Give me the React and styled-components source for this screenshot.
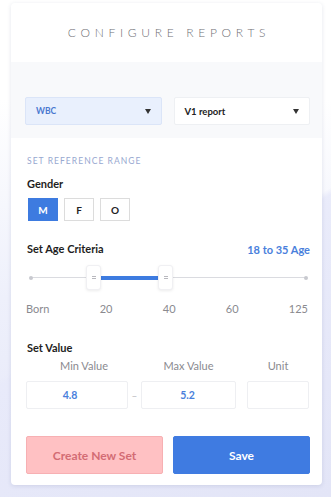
import styled, { createGlobalStyle } from 'styled-components'

const GlobalStyle = createGlobalStyle`
  html, body {
    margin: 0;
    padding: 0;
  }
  body {
    font-family: Lato, 'Open Sans', sans-serif;
    width: 331px;
    height: 497px;
    overflow: hidden;
    background:
      linear-gradient(150deg, rgba(255,255,255,0) 55%, rgba(232,234,250,0.9) 56%, #e3e5f7 100%),
      linear-gradient(180deg, #ffffff 0%, #ffffff 20%, #eef0fb 60%, #e4e6f8 100%);
  }
`

const Page = styled.div`
  padding: 3px 9px 0 11px;
`

const Card = styled.div`
  background: #fff;
  border-radius: 4px;
  box-shadow: 0 1px 4px rgba(60, 70, 120, 0.14);
  overflow: hidden;
`

const Header = styled.div`
  height: 59px;
  display: flex;
  align-items: center;
  justify-content: center;
  font-size: 12px;
  font-weight: 300;
  letter-spacing: 4.7px;
  color: #6f6f75;
  padding-left: 5px;
`

const SelectBar = styled.div`
  background: #f8f9fb;
  padding: 35px 12px 13px 14px;
  display: grid;
  grid-template-columns: 1fr 1fr;
  gap: 12px;
`

const Select = styled.div`
  height: 28px;
  box-sizing: border-box;
  display: flex;
  align-items: center;
  justify-content: space-between;
  padding: 0 10px 0 10px;
  border-radius: 2px;
  background: ${p => (p.$active ? '#e9f0fd' : '#fff')};
  border: 1px solid ${p => (p.$active ? '#dbe5f8' : '#eef0f3')};
  color: ${p => (p.$active ? '#4a78d0' : '#222')};
  font-size: ${p => (p.$active ? '8.5px' : '9.5px')};
  font-weight: 700;
`

const Caret = styled.span`
  width: 0;
  height: 0;
  border-left: 3.5px solid transparent;
  border-right: 3.5px solid transparent;
  border-top: 5px solid #333;
`

const Body = styled.div`
  padding: 18px 12px 11px 14px;
  display: flex;
  flex-direction: column;
`

const Overline = styled.div`
  font-size: 8.5px;
  line-height: 10px;
  letter-spacing: 1.05px;
  color: #97a8d0;
  margin-left: 2px;
`

const Label = styled.div`
  font-size: 11px;
  line-height: 14px;
  font-weight: 700;
  color: #1e1e22;
  margin-top: ${p => p.$top || 0}px;
  margin-left: 2px;
`

const Row = styled.div`
  display: flex;
  justify-content: space-between;
  align-items: center;
  margin-top: ${p => p.$top || 0}px;
`

const RangeText = styled.span`
  font-size: 11px;
  font-weight: 700;
  color: #4a7fdc;
`

const GenderGroup = styled.div`
  display: flex;
  gap: 6px;
  margin: 7px 0 0 3px;
`

const GenderBtn = styled.div`
  width: 30px;
  height: 23px;
  box-sizing: border-box;
  display: flex;
  align-items: center;
  justify-content: center;
  font-size: 10px;
  font-weight: 700;
  background: ${p => (p.$on ? '#3d7be0' : '#fff')};
  color: ${p => (p.$on ? '#fff' : '#222')};
  border: 1px solid ${p => (p.$on ? '#3d7be0' : '#dcdcdc')};
`

const Slider = styled.div`
  position: relative;
  height: 25px;
  margin: 9px 0 0 0;
`

const Track = styled.div`
  position: absolute;
  left: 5px;
  right: 3px;
  top: 12px;
  height: 1px;
  background: #dadbe0;

  &::before,
  &::after {
    content: '';
    position: absolute;
    top: -1.5px;
    width: 4px;
    height: 4px;
    border-radius: 50%;
    background: #c8c9cf;
  }
  &::before { left: -1px; }
  &::after { right: -1px; }
`

const Fill = styled.div`
  position: absolute;
  top: 10.5px;
  height: 4px;
  background: #3d7be0;
`

const Handle = styled.div`
  position: absolute;
  top: 0;
  width: 15px;
  height: 25px;
  box-sizing: border-box;
  border-radius: 3px;
  background: #fff;
  border: 1px solid #f0f0f3;
  box-shadow: 0 1px 3px rgba(0, 0, 0, 0.08);

  &::before {
    content: '';
    position: absolute;
    left: 5px;
    top: 10px;
    width: 4px;
    height: 1px;
    border-top: 1px solid #b8b8be;
    border-bottom: 1px solid #b8b8be;
  }
`

const Ticks = styled.div`
  display: flex;
  justify-content: space-between;
  margin: 12px 2px 0 1px;
  font-size: 11px;
  line-height: 14px;
  color: #8a8a8f;
`

const Cols = styled.div`
  display: grid;
  grid-template-columns: 102px 13px 95px 73px;
  margin-top: ${p => p.$top || 0}px;
  margin-left: 1px;
  align-items: center;

  & > :nth-child(4) { margin-left: 11px; }
`

const ColHead = styled.div`
  font-size: 11px;
  line-height: 13px;
  color: #8a8a8f;
  text-align: center;
  padding-left: ${p => p.$shift || 0}px;
`

const ValueBox = styled.div`
  height: 28px;
  box-sizing: border-box;
  border: 1px solid #eeeff2;
  border-radius: 2px;
  background: #fff;
  display: flex;
  align-items: center;
  justify-content: center;
  font-size: 10.5px;
  font-weight: 700;
  color: #4a7fdc;
  padding-right: ${p => p.$shift || 0}px;
`

const Dash = styled.div`
  text-align: center;
  color: #b8b8bd;
  font-size: 10px;
`

const Actions = styled.div`
  display: grid;
  grid-template-columns: 137px 137px;
  justify-content: space-between;
  margin: 27px 0 0 1px;
`

const ActionBtn = styled.div`
  height: 38px;
  box-sizing: border-box;
  border-radius: 2px;
  display: flex;
  align-items: center;
  justify-content: center;
  font-size: 12px;
  font-weight: 700;
  background: ${p => (p.$primary ? '#3f7be1' : '#ffc1c3')};
  color: ${p => (p.$primary ? '#fff' : '#d36c74')};
  border: 1px solid ${p => (p.$primary ? '#3f7be1' : '#f7b0b3')};
`

export default function App() {
  // handles sit at 18 and 35 on the scale
  const low = 61
  const high = 133
  return (
    <>
      <GlobalStyle />
      <Page>
        <Card>
          <Header>CONFIGURE REPORTS</Header>
          <SelectBar>
            <Select $active>
              WBC <Caret />
            </Select>
            <Select>
              V1 report <Caret />
            </Select>
          </SelectBar>
          <Body>
            <Overline>SET REFERENCE RANGE</Overline>
            <Label $top={11}>Gender</Label>
            <GenderGroup>
              <GenderBtn $on>M</GenderBtn>
              <GenderBtn>F</GenderBtn>
              <GenderBtn>O</GenderBtn>
            </GenderGroup>
            <Row $top={21}>
              <Label>Set Age Criteria</Label>
              <RangeText>18 to 35 Age</RangeText>
            </Row>
            <Slider>
              <Track />
              <Fill style={{ left: low + 15, width: high - low - 15 }} />
              <Handle style={{ left: low }} />
              <Handle style={{ left: high }} />
            </Slider>
            <Ticks>
              <span>Born</span>
              <span>20</span>
              <span>40</span>
              <span>60</span>
              <span>125</span>
            </Ticks>
            <Label $top={25}>Set Value</Label>
            <Cols $top={4}>
              <ColHead $shift={14}>Min Value</ColHead>
              <span />
              <ColHead>Max Value</ColHead>
              <ColHead>Unit</ColHead>
            </Cols>
            <Cols $top={9}>
              <ValueBox $shift={14}>4.8</ValueBox>
              <Dash>–</Dash>
              <ValueBox $shift={2}>5.2</ValueBox>
              <ValueBox />
            </Cols>
            <Actions>
              <ActionBtn>Create New Set</ActionBtn>
              <ActionBtn $primary>Save</ActionBtn>
            </Actions>
          </Body>
        </Card>
      </Page>
    </>
  )
}
